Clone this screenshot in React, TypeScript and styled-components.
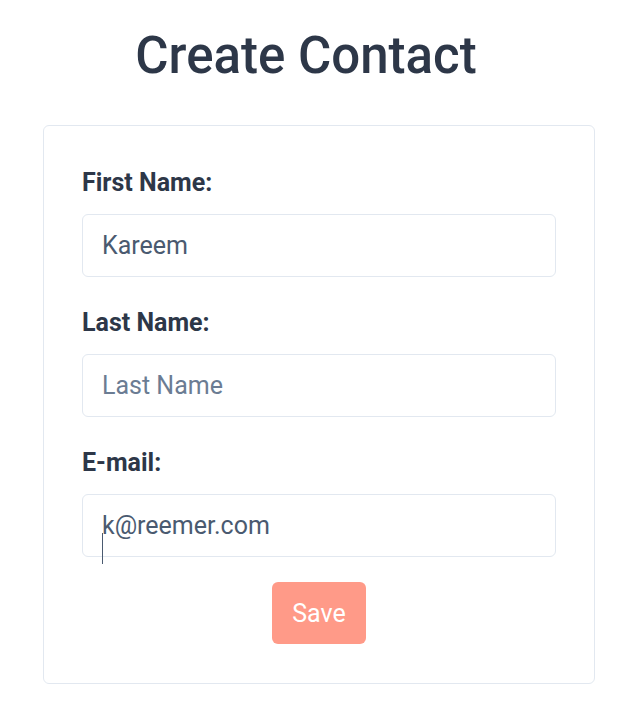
import React from 'react';
import styled, {createGlobalStyle} from 'styled-components';

const GlobalStyle = createGlobalStyle`
  body {
    margin: 0;
    background: #ffffff;
    font-family: Roboto, "Liberation Sans", sans-serif;
  }
`;

const Page = styled.div`
  width: 622px;
  padding-top: 26px;
  padding-bottom: 20px;
`;

const Title = styled.h1`
  margin: 0 0 40px 0;
  padding-right: 10px;
  text-align: center;
  font-size: 51px;
  font-weight: 500;
  color: #2d3748;
`;

const Card = styled.form`
  margin-left: 43px;
  width: 552px;
  box-sizing: border-box;
  border: 1px solid #e2e8f0;
  border-radius: 6px;
  padding: 42px 38px 39px 38px;
  display: flex;
  flex-direction: column;
`;

const Field = styled.div<{last?: boolean}>`
  display: flex;
  flex-direction: column;
  gap: 17px;
  margin-bottom: ${p => (p.last ? '25px' : '31px')};
  position: relative;
`;

const Label = styled.label`
  font-size: 25px;
  font-weight: 700;
  color: #2d3748;
`;

const Input = styled.input`
  height: 63px;
  box-sizing: border-box;
  border: 1px solid #e2e8f0;
  border-radius: 6px;
  padding: 0 19px;
  font-family: Roboto, "Liberation Sans", sans-serif;
  font-size: 25px;
  color: #4a5a70;
  outline: none;

  &::placeholder {
    color: #6b7c93;
  }
`;

const Caret = styled.span`
  position: absolute;
  left: 20px;
  bottom: -7px;
  width: 1px;
  height: 31px;
  background: #4a5a70;
`;

const SaveButton = styled.button`
  align-self: center;
  width: 94px;
  height: 62px;
  border: none;
  border-radius: 6px;
  background: #ff9a88;
  color: #ffffff;
  font-family: Roboto, "Liberation Sans", sans-serif;
  font-size: 25px;
  cursor: pointer;
`;

export default function App() {
    return (
        <>
            <GlobalStyle/>
            <Page>
                <Title>Create Contact</Title>
                <Card onSubmit={e => e.preventDefault()}>
                    <Field>
                        <Label>First Name:</Label>
                        <Input defaultValue="Kareem" placeholder="First Name"/>
                    </Field>
                    <Field>
                        <Label>Last Name:</Label>
                        <Input placeholder="Last Name"/>
                    </Field>
                    <Field last>
                        <Label>E-mail:</Label>
                        <Input defaultValue="k@reemer.com" placeholder="E-mail"/>
                        <Caret/>
                    </Field>
                    <SaveButton type="submit">Save</SaveButton>
                </Card>
            </Page>
        </>
    );
}
